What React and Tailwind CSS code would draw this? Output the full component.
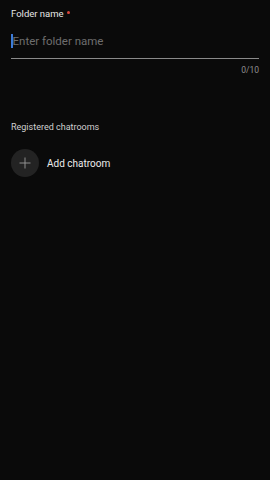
export default function App() {
  return (
    <div className="w-[270px] h-[480px] bg-[#0a0a0a] text-white" style={{ fontFamily: 'Roboto, "Noto Sans", sans-serif' }}>
      <div className="px-[11px] pt-[8px]">
        <div className="flex items-start text-[9.5px] leading-[12px] text-[#e6e6e6]">
          Folder name
          <span className="ml-[3px] mt-[3px] w-[3px] h-[3px] rounded-full bg-[#d9453a]" />
        </div>
        <div className="mt-[12px] flex items-center h-[18px]">
          <span className="w-[1.5px] h-[14px] bg-[#3d7bd9]" />
          <span className="text-[11.5px] text-[#6e6e6e] leading-[18px]">Enter folder name</span>
        </div>
        <div className="mt-[8px] h-px bg-[#8a8a8a]" />
        <div className="mt-[6px] text-right text-[8.5px] text-[#8f8f8f] leading-[11px]">0/10</div>
        <div className="mt-[45px] text-[9px] text-[#d0d0d0] leading-[12px]">Registered chatrooms</div>
        <div className="mt-[16px] flex items-center">
          <div className="w-[28px] h-[28px] rounded-full bg-[#232323] flex items-center justify-center">
            <svg width="12" height="12" viewBox="0 0 12 12" fill="none" stroke="#9a9a9a" strokeWidth="0.9">
              <path d="M6 0.5V11.5M0.5 6H11.5" />
            </svg>
          </div>
          <span className="ml-[8px] text-[10px] text-[#ececec]">Add chatroom</span>
        </div>
      </div>
    </div>
  )
}
